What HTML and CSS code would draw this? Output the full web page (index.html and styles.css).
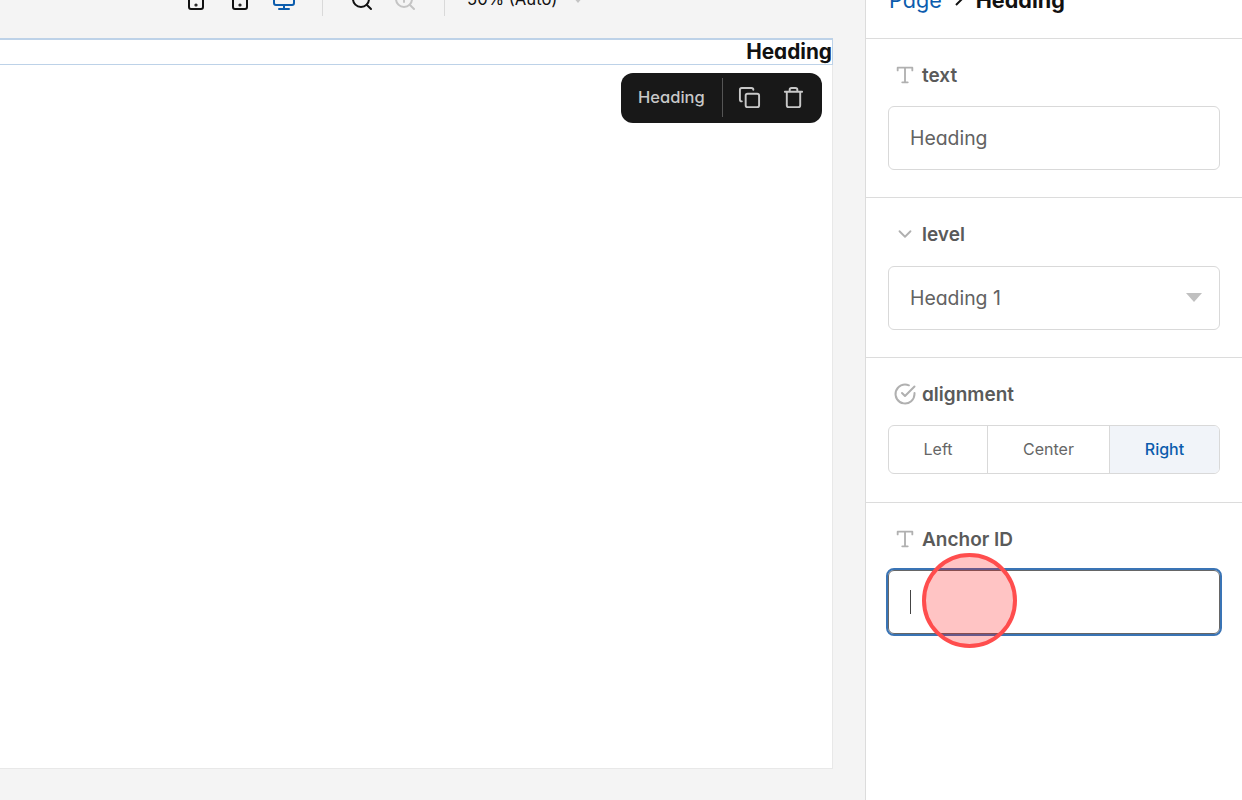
FILE: index.html
```html
<!DOCTYPE html>
<html lang="en">
<head>
<meta charset="utf-8">
<title>Heading editor</title>
<link rel="stylesheet" href="styles.css">
</head>
<body>
<div class="app">
  <main class="workspace">
    <header class="topbar">
      <div class="tool-group devices">
        <svg class="ico" viewBox="0 0 24 24"><rect x="5" y="3" width="14" height="18" rx="2"/><circle cx="12" cy="17" r=".6"/></svg>
        <svg class="ico" viewBox="0 0 24 24"><rect x="5" y="3" width="14" height="18" rx="2"/><circle cx="12" cy="17" r=".6"/></svg>
        <svg class="ico active" viewBox="0 0 24 24"><rect x="2" y="3" width="20" height="14" rx="2"/><path d="M12 17v4M7 21h10"/></svg>
      </div>
      <span class="sep first"></span>
      <div class="tool-group zoom">
        <svg class="ico" viewBox="0 0 24 24"><circle cx="11" cy="11" r="8"/><path d="m21 21-4.3-4.3"/></svg>
        <svg class="ico muted" viewBox="0 0 24 24"><circle cx="11" cy="11" r="8"/><path d="m21 21-4.3-4.3M11 8v6M8 11h6"/></svg>
      </div>
      <span class="sep second"></span>
      <span class="zoom-label">50% (Auto)</span>
      <span class="zoom-caret"></span>
    </header>
    <section class="canvas">
      <div class="heading-block"><h1>Heading</h1></div>
      <div class="block-toolbar">
        <span class="block-name">Heading</span>
        <span class="block-sep"></span>
        <svg class="tb-ico" viewBox="0 0 24 24"><rect x="8" y="8" width="14" height="14" rx="2"/><path d="M4 16c-1.1 0-2-.9-2-2V4c0-1.100.9-2 2-2h10c1.100 0 2 .9 2 2"/></svg>
        <svg class="tb-ico" viewBox="0 0 24 24"><path d="M3 6h18M19 6v14c0 1-1 2-2 2H7c-1 0-2-1-2-2V6M8 6V4c0-1 1-2 2-2h4c1 0 2 1 2 2v2"/></svg>
      </div>
    </section>
  </main>
  <aside class="panel">
    <nav class="crumbs"><a>Page</a><svg class="crumb-arrow" viewBox="0 0 12 12"><path d="m3 1 5 5-5 5"/></svg><strong>Heading</strong></nav>
    <section class="field">
      <div class="label"><svg class="label-ico" viewBox="0 0 24 24"><path d="M4 7V4h16v3M12 4v16M9 20h6"/></svg>text</div>
      <div class="input">Heading</div>
    </section>
    <section class="field level">
      <div class="label"><svg class="label-ico" viewBox="0 0 24 24"><path d="m6 9 6 6 6-6"/></svg>level</div>
      <div class="input select">Heading 1<span class="select-caret"></span></div>
    </section>
    <section class="field align">
      <div class="label"><svg class="label-ico check" viewBox="0 0 24 24"><path d="M21.500 11.100V12a9.500 9.500 0 1 1-5.600-8.700"/><path d="m21.500 4.500-9.500 9.500-3-3"/></svg>alignment</div>
      <div class="segments">
        <span class="seg seg-left">Left</span>
        <span class="seg seg-center">Center</span>
        <span class="seg seg-right">Right</span>
      </div>
    </section>
    <section class="field last">
      <div class="label"><svg class="label-ico" viewBox="0 0 24 24"><path d="M4 7V4h16v3M12 4v16M9 20h6"/></svg>Anchor ID</div>
      <div class="input focused"><span class="caret"></span></div>
    </section>
  </aside>
</div>
<div class="pointer"></div>
</body>
</html>
```
FILE: styles.css
```css
* { box-sizing: border-box; }
html, body { margin: 0; height: 800px; overflow: hidden; background: #f4f4f4; }
body { font-family: Inter, "Liberation Sans", sans-serif; font-feature-settings: "cv11"; position: relative; }
.app { display: flex; height: 840px; margin-top: -40px; }
.workspace { width: 865px; flex: none; display: flex; flex-direction: column; background: #f4f4f4; overflow: hidden; }
.topbar { height: 79px; flex: none; display: flex; align-items: center; padding: 0 0 0 184px; }
.tool-group { display: flex; align-items: center; }
.devices { gap: 20px; }
.zoom { gap: 19px; }
.ico { width: 24px; height: 24px; fill: none; stroke: #111; stroke-width: 2; stroke-linecap: round; stroke-linejoin: round; }
.ico.active { stroke: #0b5cad; }
.ico.muted { stroke: #c4c4c4; }
.sep { width: 1px; height: 32px; background: #d9d9d9; }
.sep.first { margin: 0 27px 0 26px; }
.sep.second { margin: 0 22px 0 27px; }
.zoom-label { font-size: 16.700px; color: #111; padding-bottom: 1px; }
.zoom-caret { width: 0; height: 0; margin-left: 16px; border: 5px solid transparent; border-top: 6px solid #c4c4c4; border-bottom: 0; }
.canvas { position: relative; width: 833px; height: 730px; background: #fff; border-right: 1px solid #e8e8e8; border-bottom: 1px solid #e8e8e8; flex: none; }
.heading-block { height: 27px; margin: -1px -1px 0 0; border: 1px solid #bdd2e8; border-top-width: 2px; border-left: 0; display: flex; justify-content: flex-end; align-items: center; }
.heading-block h1 { margin: 0; font-size: 20.800px; font-weight: 700; line-height: 24px; color: #111; }
.block-toolbar { position: absolute; left: 621px; top: 34px; width: 201px; height: 50px; background: #181818; border-radius: 12px; display: flex; align-items: center; padding: 0 0 1px 17px; color: #c8c8c8; }
.block-name { font-size: 16.500px; font-weight: 500; width: 67px; padding-bottom: 1px; white-space: nowrap; }
.block-sep { width: 1px; height: 39px; background: #555; margin: 0 15px 0 17px; }
.tb-ico { width: 23px; height: 23px; fill: none; stroke: #c8c8c8; stroke-width: 2; stroke-linecap: round; stroke-linejoin: round; }
.tb-ico + .tb-ico { margin-left: 21px; }
.panel { width: 377px; flex: none; background: #fff; border-left: 1px solid #dcdcdc; }
.crumbs { height: 79px; border-bottom: 1px solid #dcdcdc; display: flex; align-items: center; padding: 1px 0 0 23px; font-size: 21.600px; }
.crumbs a { color: #0b5cad; }
.crumbs strong { color: #111; font-weight: 700; }
.crumb-arrow { width: 12px; height: 12px; margin: 0 11px; fill: none; stroke: #111; stroke-width: 2; }
.field { padding: 24px 22px 27px 22px; border-bottom: 1px solid #dcdcdc; }
.field.align { padding-bottom: 28px; }
.field.last { border-bottom: 0; }
.label { height: 24px; display: flex; align-items: center; font-size: 19px; font-weight: 600; color: #5a5a5a; margin-bottom: 19px; padding-left: 6px; }
.field.level .label { margin-bottom: 20px; }
.label-ico { width: 22px; height: 22px; margin-right: 6px; fill: none; stroke: #b0b0b0; stroke-width: 2; stroke-linecap: round; stroke-linejoin: round; }
.label-ico.check { width: 24px; height: 24px; margin: 0 5px 0 -1px; }
.input { position: relative; height: 64px; border: 1px solid #d9d9d9; border-radius: 6px; display: flex; align-items: center; padding: 0 0 1px 21px; font-size: 19.400px; color: #626262; background: #fff; }
.select-caret { position: absolute; right: 17px; top: 26px; width: 0; height: 0; border: 8px solid transparent; border-top: 9px solid #c0c0c0; border-bottom: 0; }
.segments { display: flex; height: 49px; border: 1px solid #d9d9d9; border-radius: 6px; overflow: hidden; font-size: 16px; color: #666; }
.seg { display: flex; align-items: center; justify-content: center; padding-bottom: 1px; }
.seg-left { width: 98px; }
.seg-center { width: 122px; border-left: 1px solid #d9d9d9; }
.seg-right { flex: 1; border-left: 1px solid #d9d9d9; background: #f1f4f9; color: #0b5cad; font-weight: 500; }
.input.focused { border-color: #666; outline: 2px solid #3a74b5; padding-bottom: 0; }
.caret { width: 1px; height: 24px; background: #444; }
.pointer { position: absolute; left: 922px; top: 553px; width: 95px; height: 95px; border-radius: 50%; border: 4px solid #ff4d4d; background: rgba(255, 0, 0, .23); }
```
